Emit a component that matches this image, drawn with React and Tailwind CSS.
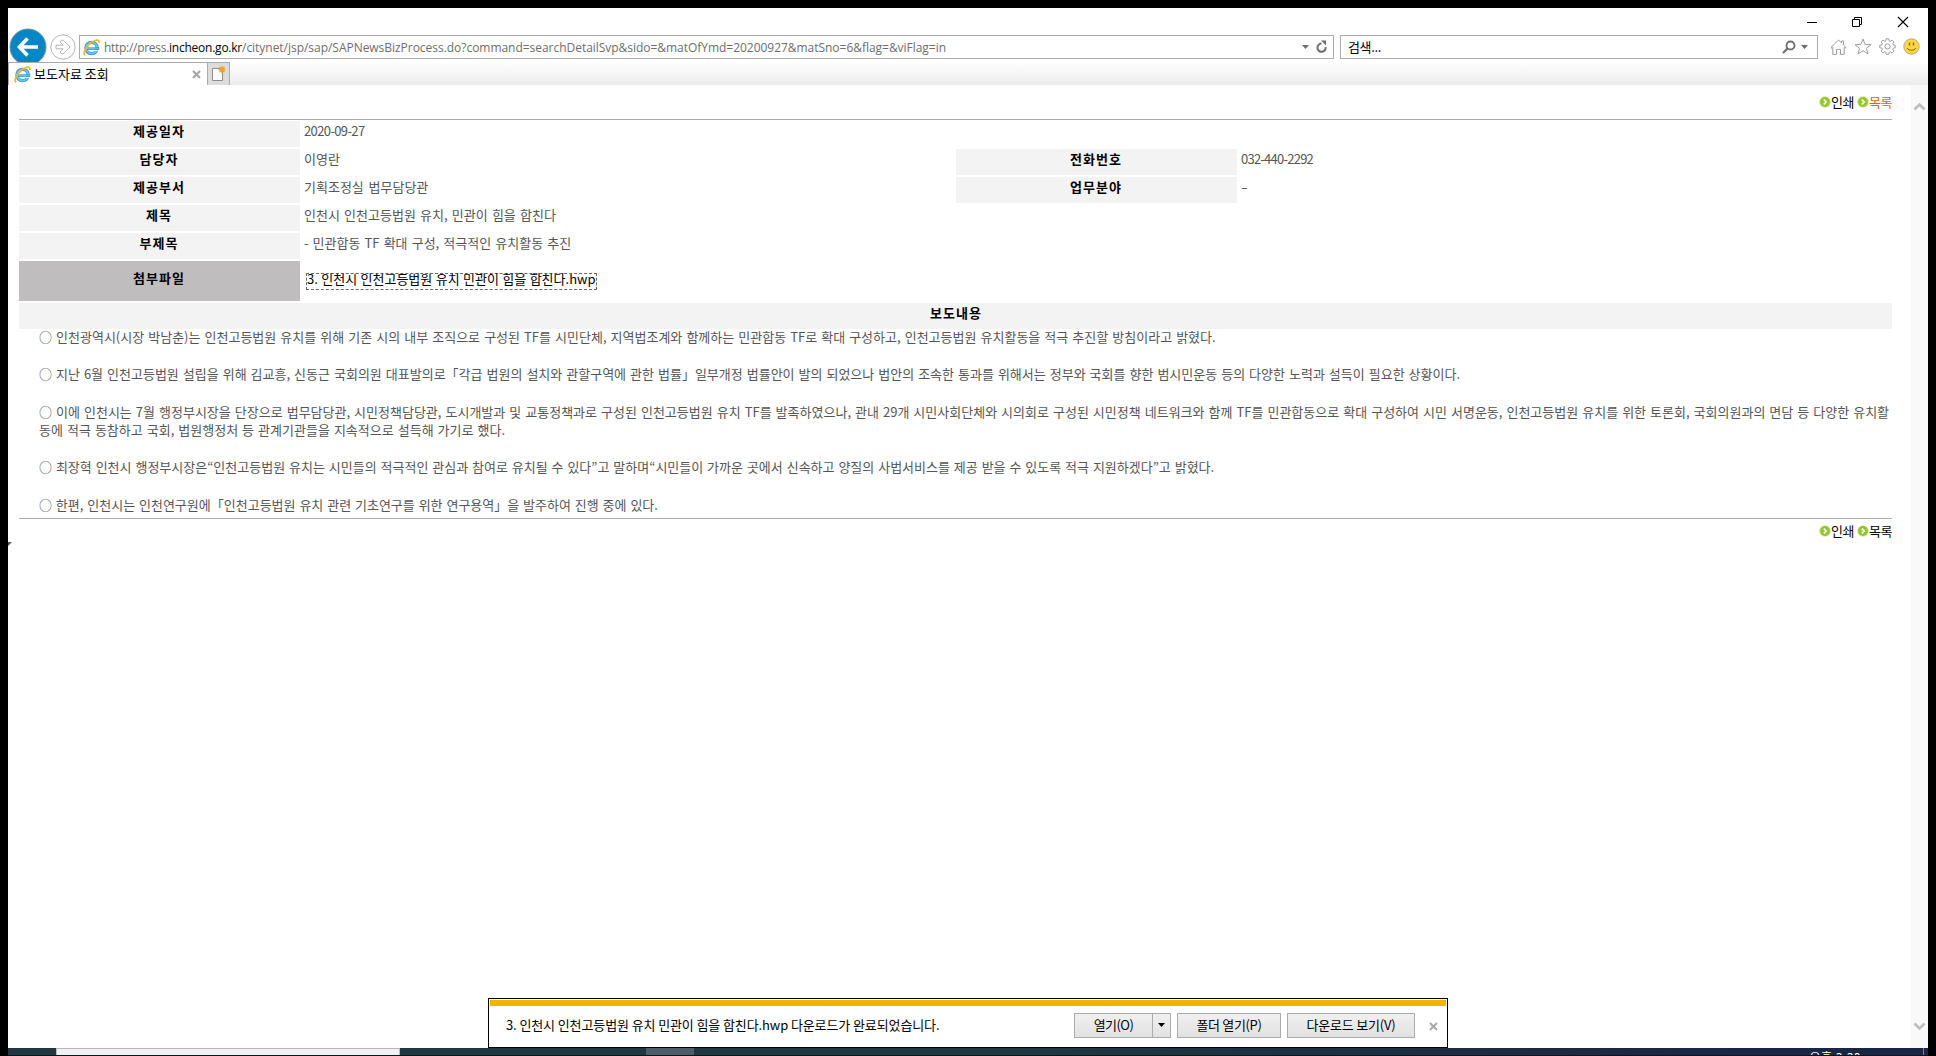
function IeLogo() {
  return (
    <svg width="17" height="17" viewBox="0 0 17 17" className="shrink-0">
      <circle cx="8.6" cy="9" r="5.6" fill="none" stroke="#2f8fd0" strokeWidth="3.4" />
      <circle cx="8.6" cy="9" r="5.6" fill="none" stroke="#6cc5f1" strokeWidth="1.8" />
      <path d="M10.5 10.7H17v1.6h-4z" fill="#fff" />
      <path d="M4 9.6h12.2" stroke="#2f8fd0" strokeWidth="2.4" />
      <path d="M4 9.4h11.6" stroke="#6cc5f1" strokeWidth="1" />
      <path d="M2.2 16.2C-.6 14.6 2.8 7.6 8.4 3.6 12.4.8 16.6-.2 15.8 4" fill="none" stroke="#f4b81c" strokeWidth="1.8" />
    </svg>
  );
}

function Caret({ className }) {
  return (
    <svg width="7" height="4" viewBox="0 0 7 4" className={className}>
      <path d="M0 0h7L3.5 4z" fill="currentColor" />
    </svg>
  );
}

function Bullet() {
  return (
    <svg width="12" height="12" viewBox="0 0 12 12" className="shrink-0">
      <circle cx="6" cy="6" r="5.8" fill="#cfe6a0" />
      <circle cx="6" cy="6" r="4.9" fill="#96c62d" />
      <path d="M4.8 3.6 7.2 6 4.8 8.4" fill="none" stroke="#fff" strokeWidth="1.6" />
    </svg>
  );
}

function PageLinks({ listClass }) {
  return (
    <div className="flex h-4 items-center justify-end text-[13px] leading-4 tracking-[-0.4px] text-black">
      <Bullet />
      <span className="w-[24px] whitespace-nowrap">인쇄</span>
      <span className="ml-[2px] flex"><Bullet /></span>
      <span className={listClass}>목록</span>
    </div>
  );
}

function Window() {
  return (
    <div className="flex h-[27px] items-start justify-end pt-[8px] pr-[19px] text-black">
      <svg width="12" height="12" viewBox="0 0 12 12"><path d="M1 6.5h10" stroke="currentColor" /></svg>
      <svg width="12" height="12" viewBox="0 0 12 12" className="ml-[33px]" fill="none" stroke="currentColor">
        <path d="M1.5 3.5h7v7h-7zM3.5 3V1.5h7v7H9" />
      </svg>
      <svg width="12" height="12" viewBox="0 0 12 12" className="ml-[34px]"><path d="M1 1l10 10M11 1 1 11" stroke="currentColor" strokeWidth="1.1" /></svg>
    </div>
  );
}

function Tools() {
  return (
    <div className="flex h-6 items-center pl-[12px] text-[#9c9c9c]">
      <svg width="17" height="16" viewBox="0 0 17 16" className="-mt-px" fill="none" stroke="currentColor">
        <path d="M1 8.4 8.5 1 11.5 4V2h2v4L16 8.4l-1 .9-.8-.8v6.9h-3.7v-5h-4v5H2.8V8.5l-.8.8z" />
      </svg>
      <svg width="18" height="17" viewBox="0 0 18 17" className="-mt-px ml-[7px]" fill="none" stroke="currentColor">
        <path d="M9 1l2.1 5.4 5.9.3-4.6 3.6L14 16 9 12.7 4 16l1.6-5.7L1 6.7l5.9-.3z" />
      </svg>
      <svg width="17" height="17" viewBox="0 0 17 17" className="-mt-px ml-[7px]" fill="none" stroke="currentColor">
        <circle cx="8.5" cy="8.5" r="2.6" />
        <path d="M7.2.8h2.6l.3 2 1.2.5 1.700-1.200 1.900 1.900-1.200 1.700.5 1.200 2 .3v2.600l-2 .3-.5 1.200 1.200 1.700-1.900 1.900-1.700-1.200-1.200.5-.3 2H7.200l-.3-2-1.200-.5L4 14.900l-1.900-1.900 1.200-1.700-.5-1.200-2-.3V7.200l2-.3.5-1.200L2.100 4 4 2.100l1.700 1.200 1.200-.5z" />
      </svg>
      <svg width="17" height="17" viewBox="0 0 17 17" className="-mt-px ml-[7px]">
        <circle cx="8.5" cy="8.5" r="7.7" fill="#fcd640" stroke="#b3a36a" strokeWidth=".9" />
        <path d="M6.5 4.500v3M10.500 4.500v3" stroke="#7a6320" strokeWidth="1.300" />
        <path d="M4.200 10c1.500 3 7.100 3 8.600 0" fill="none" stroke="#7a6320" strokeWidth="1" />
      </svg>
    </div>
  );
}

function Navigation() {
  return (
    <div className="flex h-[27px] items-start">
      <svg width="38" height="38" viewBox="0 0 38 38" className="-mt-[7px] ml-[1px] shrink-0">
        <circle cx="19" cy="19" r="18" fill="#0586c5" stroke="#7d8d96" strokeWidth="1" />
        <path d="M29 19H11M18.500 10.500 10.500 19l8 8.500" fill="none" stroke="#fff" strokeWidth="3.600" />
      </svg>
      <svg width="26" height="26" viewBox="0 0 26 26" className="-mt-px ml-[3px] shrink-0" fill="none" stroke="#b3b3b3">
        <circle cx="13" cy="13" r="12.200" />
        <path d="M6 11.200h7.200L10 8l1.400-1.800h1.800L20 13l-6.800 6.800h-1.800L10 18l3.200-3.200H6z" />
      </svg>
      <div className="ml-[3px] flex h-6 w-[1255px] items-center border border-[#ababab] pl-[3px] text-[#6d6d6d]">
        <IeLogo />
        <div className="ml-[4px] flex pt-px whitespace-nowrap font-['Open_Sans','Noto_Sans_CJK_KR',sans-serif] text-[12px] leading-5">
          <span className="tracking-[-0.29px]">http://press.</span>
          <span className="tracking-[-0.235px] text-black">incheon.go.kr</span>
          <span className="tracking-[-0.032px]">/citynet/jsp/sap/SAPNewsBizProcess.do?command=searchDetailSvp&amp;sido=&amp;matOfYmd=20200927&amp;matSno=6&amp;flag=&amp;viFlag=in</span>
        </div>
        <Caret className="mr-[6px] ml-auto" />
        <svg width="13" height="14" viewBox="0 0 13 14" className="mr-[5px]">
          <path d="M10.600 7A4.100 4.100 0 1 1 6.500 3.600" fill="none" stroke="currentColor" strokeWidth="2" />
          <path d="M6 .5h5v5z" fill="currentColor" />
        </svg>
      </div>
      <div className="ml-[6px] flex h-6 w-[478px] items-center border border-[#ababab] pl-[7px] text-[#6d6d6d]">
        <span className="text-[13px] leading-5 tracking-[-0.35px] text-black">검색...</span>
        <svg width="14" height="14" viewBox="0 0 14 14" className="mr-[5px] ml-auto" fill="none" stroke="currentColor">
          <circle cx="8.500" cy="5.500" r="4" strokeWidth="1.800" />
          <path d="M5.500 8.500 1 13" strokeWidth="2.200" />
        </svg>
        <Caret className="mr-[9px]" />
      </div>
      <Tools />
    </div>
  );
}

function Tabs() {
  return (
    <div className="flex h-[23px] bg-linear-to-b from-white to-[#ececec]">
      <div className="flex w-[199px] items-center border-t border-l border-[#ababab] bg-white pl-[5px]">
        <IeLogo />
        <span className="-mt-px ml-[3px] whitespace-nowrap text-[13px] leading-5 text-black">보도자료 조회</span>
        <svg width="9" height="9" viewBox="0 0 9 9" className="mr-[6px] ml-auto"><path d="M1 1l7 7M8 1 1 8" stroke="#a3a3a3" strokeWidth="2" /></svg>
      </div>
      <div className="flex w-[23px] justify-center border border-b-0 border-[#ababab] bg-[#dcdcdc] pt-[2px]">
        <svg width="15" height="18" viewBox="0 0 15 18">
          <path d="M1.500 3.500h10v12h-10z" fill="#fbfbfb" stroke="#8c8c8c" />
          <path d="M11 1v7M7.500 4.500h7M8.500 2l5 5M13.500 2l-5 5" stroke="#f0a01e" strokeWidth="1.300" />
        </svg>
      </div>
    </div>
  );
}

const valueText = "pl-[4px] text-[13px] leading-[20px] whitespace-nowrap text-[#555]";
const headText = "bg-[#f3f3f3] pr-px text-center text-[13px] font-bold leading-[20px] tracking-[1px] text-black";

function Row({ label, children }) {
  return (
    <div className="grid h-[26px] grid-cols-[281px_1fr]">
      <div className={headText}>{label}</div>
      <div className={valueText}>{children}</div>
    </div>
  );
}

function PairRow({ label, value, label2, value2 }) {
  return (
    <div className="grid h-[26px] grid-cols-[281px_656px_281px_1fr]">
      <div className={headText}>{label}</div>
      <div className={valueText}>{value}</div>
      <div className={headText}>{label2}</div>
      <div className={valueText}>{value2}</div>
    </div>
  );
}

function Article() {
  return (
    <div className="flex h-[190px] flex-col pl-[20px] text-[13px] leading-[18.600px] whitespace-nowrap text-[#555]">
      <p className="[word-spacing:1.150px]">○ 인천광역시(시장 박남춘)는 인천고등법원 유치를 위해 기존 시의 내부 조직으로 구성된 TF를 시민단체, 지역법조계와 함께하는 민관합동 TF로 확대 구성하고, 인천고등법원 유치활동을 적극 추진할 방침이라고 밝혔다.</p>
      <p className="mt-[18.700px] [word-spacing:1.080px]">○ 지난 6월 인천고등법원 설립을 위해 김교흥, 신동근 국회의원 대표발의로「각급 법원의 설치와 관할구역에 관한 법률」일부개정 법률안이 발의 되었으나 법안의 조속한 통과를 위해서는 정부와 국회를 향한 범시민운동 등의 다양한 노력과 설득이 필요한 상황이다.</p>
      <p className="mt-[18.700px] [word-spacing:1.110px]">○ 이에 인천시는 7월 행정부시장을 단장으로 법무담당관, 시민정책담당관, 도시개발과 및 교통정책과로 구성된 인천고등법원 유치 TF를 발족하였으나, 관내 29개 시민사회단체와 시의회로 구성된 시민정책 네트워크와 함께 TF를 민관합동으로 확대 구성하여 시민 서명운동, 인천고등법원 유치를 위한 토론회, 국회의원과의 면담 등 다양한 유치활<br />동에 적극 동참하고 국회, 법원행정처 등 관계기관들을 지속적으로 설득해 가기로 했다.</p>
      <p className="mt-[18.700px] [word-spacing:0.980px]">○ 최장혁 인천시 행정부시장은“인천고등법원 유치는 시민들의 적극적인 관심과 참여로 유치될 수 있다”고 말하며“시민들이 가까운 곳에서 신속하고 양질의 사법서비스를 제공 받을 수 있도록 적극 지원하겠다”고 밝혔다.</p>
      <p className="mt-[18.700px] [word-spacing:0.960px]">○ 한편, 인천시는 인천연구원에「인천고등법원 유치 관련 기초연구를 위한 연구용역」을 발주하여 진행 중에 있다.</p>
    </div>
  );
}

function Page() {
  return (
    <main className="w-[1903px] pt-[9px] pr-[19px] pl-[11px]">
      <PageLinks listClass="w-[23px] whitespace-nowrap text-[#ff5a00]" />
      <div className="mt-[9px] flex flex-col gap-[2px] border-t border-b border-[#ababab] pt-px">
        <Row label="제공일자"><span className="tracking-[-0.620px]">2020-09-27</span></Row>
        <PairRow label="담당자" value="이영란" label2="전화번호" value2={<span className="tracking-[-0.760px]">032-440-2292</span>} />
        <PairRow label="제공부서" value={<span className="[word-spacing:1.800px]">기획조정실 법무담당관</span>} label2="업무분야" value2={<span className="inline-block scale-x-150 origin-left">-</span>} />
        <Row label="제목"><span className="[word-spacing:1.300px]">인천시 인천고등법원 유치, 민관이 힘을 합친다</span></Row>
        <Row label="부제목"><span className="[word-spacing:1.200px]">- 민관합동 TF 확대 구성, 적극적인 유치활동 추진</span></Row>
        <div className="grid h-10 grid-cols-[281px_1fr]">
          <div className="bg-[#bfbdbe] pr-px text-center text-[13px] leading-[34px] font-bold tracking-[1px] text-black">첨부파일</div>
          <div className="pt-3 pl-[6px]">
            <a className="block h-[17px] w-[291px] border border-dashed border-[#666] text-[13px] leading-[9px] whitespace-nowrap text-black [word-spacing:0.500px]">3. 인천시 인천고등법원 유치 민관이 힘을 합친다.hwp</a>
          </div>
        </div>
        <div className="h-[26px] bg-[#f3f3f3] pl-px text-center text-[13px] leading-[20px] font-bold tracking-[1px] text-black">보도내용</div>
        <div className="-mt-[3px]"><Article /></div>
      </div>
      <div className="mt-1"><PageLinks listClass="w-[23px] whitespace-nowrap" /></div>
    </main>
  );
}

const button = "flex h-[25px] items-center justify-center border border-[#ababab] bg-linear-to-b from-[#f0f0f0] to-[#e2e2e2] whitespace-nowrap";

function DownloadBar() {
  return (
    <div className="absolute top-[990px] left-[480px] z-10 h-[50px] w-[960px] border border-black bg-white p-px text-[13px] text-black">
      <div className="h-[6px] bg-[#f3b200]" />
      <div className="flex h-[38px] items-center pr-[8px] pl-[16px] leading-5">
        <span className="-mt-px tracking-[-0.110px]">3. 인천시 인천고등법원 유치 민관이 힘을 합친다.hwp 다운로드가 완료되었습니다.</span>
        <div className="ml-auto flex">
          <div className={button + " w-[79px] tracking-[-0.570px]"}>열기(O)</div>
          <div className={button + " -ml-px w-[19px]"}><Caret className="mr-px" /></div>
        </div>
        <div className={button + " ml-[6px] w-[104px] tracking-[-0.340px]"}>폴더 열기(P)</div>
        <div className={button + " ml-[6px] w-[128px] tracking-[-0.190px]"}>다운로드 보기(V)</div>
        <svg width="9" height="9" viewBox="0 0 9 9" className="mt-[2px] ml-[14px]"><path d="M1 1l7 7M8 1 1 8" stroke="#a8a8a8" strokeWidth="2" /></svg>
      </div>
    </div>
  );
}

function Taskbar() {
  return (
    <footer className="flex h-2 overflow-hidden border-b border-[#0d1420] bg-linear-to-r from-[#213840] from-50% to-[#1a2644] to-90%">
      <div className="ml-12 w-[344px] border border-b-0 border-[#b8b8b8] bg-[#f1f1f1]" />
      <div className="ml-[246px] w-12 bg-[#4c5f68]" />
      <div className="ml-auto pt-[3px] pr-[62px] text-[12px] leading-3 tracking-[0.5px] whitespace-nowrap text-white">오후 3:30</div>
      <div className="mr-1 w-px bg-[#77809a]" />
    </footer>
  );
}

export default function App() {
  return (
    <div className="h-[1056px] w-[1936px] overflow-hidden bg-black px-2 pt-2 font-['Noto_Sans_CJK_KR',sans-serif]">
      <div className="relative h-[1048px] bg-white">
        <header>
          <div className="h-[54px] overflow-hidden">
            <Window />
            <Navigation />
          </div>
          <Tabs />
        </header>
        <div className="flex h-[963px] justify-between">
          <Page />
          <aside className="flex w-[17px] flex-col items-center justify-between bg-[#f9f9f9] pt-[17px] pb-[17px] text-[#bdbdbd]">
            <svg width="13" height="9" viewBox="0 0 13 9"><path d="M1.500 7.500l5-5 5 5" fill="none" stroke="currentColor" strokeWidth="2.600" /></svg>
            <svg width="13" height="9" viewBox="0 0 13 9"><path d="M1.500 1.500l5 5 5-5" fill="none" stroke="currentColor" strokeWidth="2.600" /></svg>
          </aside>
        </div>
        <Taskbar />
        <svg width="4" height="4" viewBox="0 0 4 4" className="absolute top-[534px] left-0"><path d="M0 0h4L0 4z" fill="#555" /></svg>
        <DownloadBar />
      </div>
    </div>
  );
}
